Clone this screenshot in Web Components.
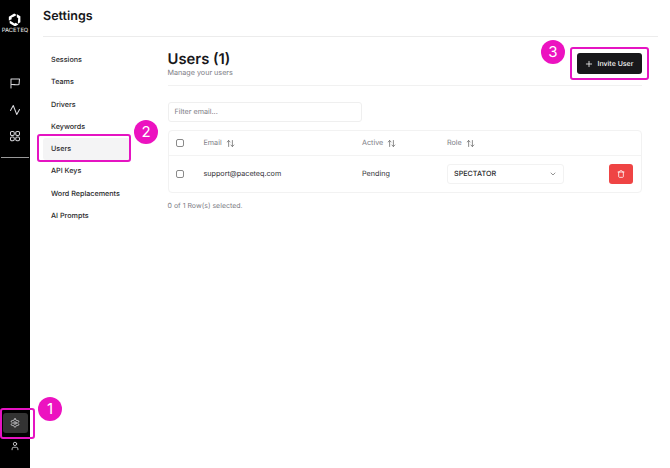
<!DOCTYPE html>
<html><head><meta charset="utf-8"><style>
html,body{margin:0;padding:0;background:#fff;height:100%;overflow:hidden}
body{font-family:Inter,"Liberation Sans",sans-serif;color:#18181b;text-rendering:geometricPrecision}
</style></head><body>
<app-shell>
<side-rail slot="rail"></side-rail>
<page-header slot="header">Settings</page-header>
<settings-nav slot="nav"></settings-nav>
<users-page slot="content"></users-page>
</app-shell>
<call-out style="--x:0px;--y:408px;--w:35px;--h:31px;--bx:38px;--by:397px">1</call-out>
<call-out style="--x:37px;--y:134px;--w:94px;--h:28px;--bx:134px;--by:120px">2</call-out>
<call-out style="--x:570px;--y:47px;--w:79px;--h:33px;--bx:541px;--by:40px">3</call-out>
<script>
const def=(n,html,init)=>customElements.define(n,class extends HTMLElement{constructor(){super();this.attachShadow({mode:'open'}).innerHTML=html;init&&init(this)}});
const ic=(d,s=10,w=1.2)=>`<svg width="${s}" height="${s}" viewBox="0 0 24 24" fill="none" stroke="currentColor" stroke-width="${w*2.4}" stroke-linecap="round" stroke-linejoin="round">${d}</svg>`;
const sort=`<svg width="9" height="9" viewBox="0 0 24 24" fill="none" stroke="#666" stroke-width="2" stroke-linecap="round" stroke-linejoin="round"><path d="m21 16-4 4-4-4M17 20V4M3 8l4-4 4 4M7 4v16"/></svg>`;
const arm=`<polygon points="1.500,6.500 11,1 15.500,3.600 10,6.500 6.500,8 6.500,11 1.500,13.500"/>`;

def('app-shell',`<style>
:host{display:grid;grid-template-columns:30px 1fr;width:670px;height:468px}
.rail{grid-row:1/3}
.main{display:flex;flex-direction:column;padding:0 12px 0 13px;min-width:0}
.body{display:flex}
</style><div class="rail"><slot name="rail"></slot></div>
<div class="main"><slot name="header"></slot><div class="body"><slot name="nav"></slot><slot name="content"></slot></div></div>`);

def('side-rail',`<style>
:host{display:flex;flex-direction:column;align-items:center;width:30px;height:468px;background:#000;color:#d8d8dc}
.logo{display:flex;flex-direction:column;align-items:center;padding-top:12.500px;color:#fff}
.logo span{font:500 5.800px/1 Inter,sans-serif;margin-top:2px;color:#ddd}
.top{display:flex;flex-direction:column;align-items:center;gap:14.500px;margin-top:43.500px}
.rule{width:28px;height:1px;background:#999;margin-top:15px}
.sp{flex:1}
.gear{width:25px;height:20px;border-radius:3px;background:#333;display:flex;align-items:center;justify-content:center;margin-bottom:8px}
.user{display:flex;margin-bottom:17px}
svg{display:block}
</style>
<div class="logo"><svg width="13.500" height="13.500" viewBox="0 0 24 24" fill="#fff">${arm}<g transform="rotate(120 12 12)">${arm}</g><g transform="rotate(240 12 12)">${arm}</g></svg><span>PACETEQ</span></div>
<div class="top">
${ic('<path d="M4 22V4h17l-1 11c-6 2-10-1-16 0"/>',12,.85)}
${ic('<path d="M3 13L8.500 3l7 18L21 11"/>',12,.85)}
${ic('<rect x="3" y="3" width="7.500" height="8" rx="2.500"/><rect x="13.500" y="3" width="7.500" height="8" rx="2.500"/><rect x="3" y="14" width="7.500" height="7.500" rx="2.500"/><rect x="13.500" y="14" width="7.500" height="7.500" rx="2.500"/>',12,.85)}
</div>
<div class="rule"></div><div class="sp"></div>
<div class="gear">${ic('<path d="M12.220 2h-.44a2 2 0 0 0-2 2v.18a2 2 0 0 1-1 1.730l-.43.25a2 2 0 0 1-2 0l-.15-.08a2 2 0 0 0-2.730.73l-.22.38a2 2 0 0 0 .73 2.730l.15.1a2 2 0 0 1 1 1.720v.51a2 2 0 0 1-1 1.740l-.15.09a2 2 0 0 0-.73 2.730l.22.38a2 2 0 0 0 2.730.73l.15-.08a2 2 0 0 1 2 0l.43.25a2 2 0 0 1 1 1.730V20a2 2 0 0 0 2 2h.44a2 2 0 0 0 2-2v-.18a2 2 0 0 1 1-1.730l.43-.25a2 2 0 0 1 2 0l.15.08a2 2 0 0 0 2.730-.73l.22-.39a2 2 0 0 0-.73-2.730l-.15-.08a2 2 0 0 1-1-1.740v-.5a2 2 0 0 1 1-1.740l.15-.09a2 2 0 0 0 .73-2.730l-.22-.38a2 2 0 0 0-2.730-.73l-.15.08a2 2 0 0 1-2 0l-.43-.25a2 2 0 0 1-1-1.730V4a2 2 0 0 0-2-2z"/><circle cx="12" cy="12" r="3"/>',10,.85)}</div>
<div class="user">${ic('<path d="M19 21v-2a4 4 0 0 0-4-4H9a4 4 0 0 0-4 4v2"/><circle cx="12" cy="7" r="4"/>',10,.85)}</div>`);

def('page-header',`<style>
:host{display:flex;align-items:center;height:37px;border-bottom:1px solid #ececec;font:600 12.500px/1 Inter,sans-serif;color:#18181b;margin-top:-1px}
</style><slot></slot>`);

def('settings-nav',`<style>
:host{display:flex;flex-direction:column;width:125px;flex:none;padding-top:11.400px;box-sizing:border-box}
a{display:flex;align-items:center;height:22.300px;width:88px;padding-left:8px;box-sizing:border-box;font:500 7.200px/1 Inter,sans-serif;color:#27272a;border-radius:3px}
a.on{background:#f4f4f5}
</style>`,el=>{['Sessions','Teams','Drivers','Keywords','Users','API Keys','Word Replacements','AI Prompts'].forEach(t=>{const a=document.createElement('a');a.textContent=t;if(t==='Users')a.className='on';el.shadowRoot.appendChild(a)})});

def('users-page',`<style>
:host{display:flex;flex-direction:column;width:474px;flex:none;font-family:Inter,sans-serif;margin-left:-.5px}
.head{display:flex;justify-content:space-between;align-items:center;height:48px;border-bottom:1px solid #f1f1f1}
h1{font:600 14.800px/17px Inter,sans-serif;margin:0;color:#18181b}
p{font:400 7.200px/9px Inter,sans-serif;margin:0;color:#7d7d85}
.title{margin-top:5px}
.btn{display:flex;align-items:center;gap:5px;width:65px;height:21px;justify-content:center;background:#18181b;color:#fafafa;border-radius:3px;font:500 7px/1 Inter,sans-serif;margin-top:5px}
.filter{display:flex;align-items:center;width:194px;height:20px;box-sizing:border-box;border:1px solid #efefef;border-radius:3px;margin-top:16px;padding-left:6px;font:400 7.200px/1 Inter,sans-serif;color:#7d7d85}
</style>
<div class="head"><div class="title"><h1>Users (1)</h1><p>Manage your users</p></div>
<div class="btn">${ic('<path d="M12 4v16M4 12h16"/>',8,1)}<span>Invite User</span></div></div>
<div class="filter">Filter email...</div>
<users-table></users-table>
<div style="font:400 7px/9px Inter,sans-serif;color:#7d7d85;margin-top:8px">0 of 1 Row(s) selected.</div>`);

def('users-table',`<style>
:host{display:block;margin-top:8px;border:1px solid #f2f2f2;border-radius:4px;box-sizing:border-box;width:474px;font-family:Inter,sans-serif}
.row{display:grid;grid-template-columns:35px 158.500px 85px 162px 1fr;align-items:center;font:400 7.200px/1 Inter,sans-serif}
.hd{height:24px;border-bottom:1px solid #f3f3f3;color:#7d7d85;font-weight:400}
.bd{height:36px;color:#333338}
.cb{width:8px;height:8px;border:1px solid #8a8a8a;border-radius:2px;margin-left:7.500px;box-sizing:border-box}
.s{display:flex;align-items:center;gap:4px}
.sel{display:flex;align-items:center;justify-content:space-between;width:117px;height:20px;border:1px solid #f2f2f2;border-radius:3px;box-sizing:border-box;padding:0 6px;font:500 7.200px/1 Inter,sans-serif;color:#27272a}
.del{display:flex;align-items:center;justify-content:center;width:24px;height:20px;background:#ef4444;border-radius:3px;color:#fff}
svg{display:block}
</style>
<div class="row hd"><div class="cb"></div><div class="s">Email ${sort}</div><div class="s">Active ${sort}</div><div class="s">Role ${sort}</div><div></div></div>
<div class="row bd"><div class="cb"></div><div>support@paceteq.com</div><div>Pending</div><div class="sel">SPECTATOR<span style="color:#777;display:flex">${ic('<path d="m6 9 6 6 6-6"/>',8,1)}</span></div><div class="del">${ic('<path d="M3 6h18M19 6v14c0 1-1 2-2 2H7c-1 0-2-1-2-2V6M8 6V4c0-1 1-2 2-2h4c1 0 2 1 2 2v2"/>',8,1)}</div></div>`);

def('call-out',`<style>
:host{display:contents}
.box{position:absolute;left:var(--x);top:var(--y);width:var(--w);height:var(--h);border:2px solid #e514c2;border-radius:3px;box-sizing:border-box}
.badge{position:absolute;left:var(--bx);top:var(--by);width:24px;height:24px;border-radius:50%;background:#ec12c0;color:#fff;font:400 15px/24px Inter,sans-serif;text-align:center}
</style><div class="box"></div><div class="badge"><slot></slot></div>`);
</script>
</body></html>
